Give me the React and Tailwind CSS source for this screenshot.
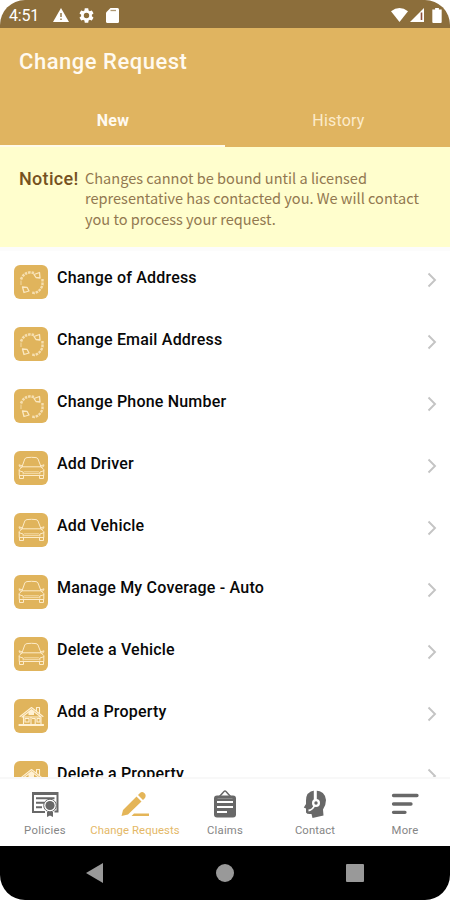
import React from "react";

function CycleIcon() {
  return (
    <svg viewBox="0 0 34 34" className="size-[34px]" fill="none" stroke="#fff1d4" strokeLinejoin="round">
      <path d="M7 14.500Q9.500 7.500 17 7.300L20 8" strokeWidth="2.600" strokeDasharray="2.500 .9" opacity=".7" />
      <path d="M20 9.500l5.500-2 .5 5.500-4-.5Z" strokeWidth="1.300" opacity=".85" />
      <path d="M28.500 14v6Q26.500 26.500 20.500 28L17.500 27.500" strokeWidth="2.400" strokeDasharray="2.600 .9" opacity=".7" />
      <path d="M15 26l-5 1.500-1.500-5.500 4.500.3Z" strokeWidth="1.300" opacity=".85" />
      <path d="M7 15.500v4.500" strokeWidth="1" opacity=".6" />
    </svg>
  );
}

function CarIcon() {
  return (
    <svg viewBox="0 0 34 34" className="size-[34px]" fill="none" stroke="#fdebc8" strokeWidth="1" strokeLinejoin="round" strokeLinecap="round">
      <path d="M8 15.800 10.800 8Q11.300 6.800 13 6.600Q17.500 6 22 6.600Q23.500 6.800 24 8L27 15.800M8 14.800l-3-1 .6 1.800 1.700.7M27 14.800l3-1-.6 1.800-1.700.7M8 15.800h19M8 15.800l-2.800 2.800V24.500h24.600v-5.900L27 15.800" />
      <path d="M5.200 19.800l4 1.200v2M29.800 19.800l-4 1.200v2M5.500 24.500v3h4v-3M25.500 24.500v3h4v-3" />
      <path d="M10.500 20.800h14M10.500 22.600h14" opacity=".7" />
    </svg>
  );
}

function HouseIcon() {
  return (
    <svg viewBox="0 0 34 34" className="size-[34px]" fill="none" stroke="#fff1d4" strokeWidth="1.100" strokeLinejoin="round" strokeLinecap="round">
      <path d="M6 17.500 17.500 8.500 29 17.500M8 18l9.500-7.300L27 18M22.500 12V8.500h3v5.800M9.500 18v7.500M27 18v7.500M5 25.500h24.500M5 26.500h24.500M8.500 18H17v7.500M17 18h10" />
      <path d="M11 19.500h4V23h-4ZM18.500 19.500h2.700v6M23 19.500h3V23h-3Z" />
      <path d="M14.500 16h5.500v-4l-2.500-1.500-3 2Z" fill="#fff1d4" stroke="none" />
    </svg>
  );
}

const requests = [
  { title: "Change of Address", Icon: CycleIcon },
  { title: "Change Email Address", Icon: CycleIcon },
  { title: "Change Phone Number", Icon: CycleIcon },
  { title: "Add Driver", Icon: CarIcon },
  { title: "Add Vehicle", Icon: CarIcon },
  { title: "Manage My Coverage - Auto", Icon: CarIcon },
  { title: "Delete a Vehicle", Icon: CarIcon },
  { title: "Add a Property", Icon: HouseIcon },
  { title: "Delete a Property", Icon: HouseIcon },
];

function StatusBar() {
  return (
    <div className="flex h-7 shrink-0 items-center bg-[#8c6e3b] pt-0.5 pl-[9px] text-white">
      <span className="w-[44px] pt-px text-[16px] leading-none tracking-[-0.2px]">4:51</span>
      <svg viewBox="0 0 16 14" className="h-3.5 w-4" fill="#fff">
        <path d="M8 0 16 14H0Z" />
        <path d="M7.300 5h1.400v4H7.300ZM7.300 10.500h1.400V12H7.300Z" fill="#8c6e3b" />
      </svg>
      <svg viewBox="2 2 20 20" className="ml-2.5 size-[15px]" fill="#fff">
        <path d="M19.140 12.940c.04-.3.060-.61.060-.94s-.02-.64-.07-.94l2.030-1.580a.49.49 0 0 0 .12-.61l-1.920-3.320a.488.488 0 0 0-.59-.22l-2.390.96c-.5-.38-1.030-.7-1.620-.94l-.36-2.540a.484.484 0 0 0-.48-.41h-3.840c-.24 0-.43.17-.47.41l-.36 2.540c-.59.24-1.130.57-1.620.94l-2.390-.96a.48.48 0 0 0-.59.22L2.740 8.870c-.12.21-.08.47.12.61l2.030 1.580c-.05.3-.09.63-.09.94s.02.64.07.94l-2.030 1.580a.49.49 0 0 0-.12.61l1.920 3.320c.12.22.37.29.59.22l2.390-.96c.5.38 1.030.7 1.620.94l.36 2.540c.05.24.24.41.48.41h3.840c.24 0 .44-.17.47-.41l.36-2.540c.59-.24 1.130-.56 1.620-.94l2.390.96c.22.08.47 0 .59-.22l1.920-3.320c.12-.22.07-.47-.12-.61ZM12 15.600a3.600 3.600 0 1 1 0-7.200 3.600 3.600 0 0 1 0 7.200Z" />
      </svg>
      <svg viewBox="0 0 13 15" className="ml-3 h-[15px] w-[13px]" fill="#fff">
        <path d="M4.500 0H11.500Q13 0 13 1.500V13.500Q13 15 11.500 15H1.500Q0 15 0 13.500V4.500Z" />
        <path d="M4.500 2.500h5.500" stroke="#8c6e3b" strokeWidth="1.300" opacity=".7" />
      </svg>
      <svg viewBox="0 0 17 14" className="ml-auto h-3.5 w-[17px]" fill="#fff">
        <path d="M8.500 14 0 3.300Q8.500-3.300 17 3.300Z" />
      </svg>
      <svg viewBox="0 0 14 14" className="ml-[2px] h-3.5 w-3.5" fill="#fff">
        <path d="M14 0V14H0Z" />
        <path d="M11.500 4.500V12" stroke="#8c4e3b" strokeWidth="1.600" />
      </svg>
      <svg viewBox="0 0 10 16" className="mr-[8px] ml-[8px] h-[15px] w-[10px]" fill="#fff">
        <path d="M3 0h4v1.500h3V15q0 1-1 1H1q-1 0-1-1V1.500h3Z" />
      </svg>
    </div>
  );
}

function Header() {
  return (
    <header className="flex h-[119px] shrink-0 flex-col bg-[#e0b460] text-[#fffaf0]">
      <h1 className="h-[67px] pt-5 pl-[19px] text-[22px] leading-7 font-medium tracking-[0.52px]">Change Request</h1>
      <div className="grid grow grid-cols-2 text-center text-base leading-[52px]">
        <div className="h-[52px] overflow-hidden border-b-[2.500px] border-[#fffbea] pl-px font-bold tracking-[0.2px]">New</div>
        <div className="pl-0.5 tracking-[0.2px] text-[#fcebcb]">History</div>
      </div>
    </header>
  );
}

function Notice() {
  return (
    <section className="flex h-[100px] shrink-0 bg-[#fffecd] pt-[21px] pl-[19px] text-[#76521f]">
      <strong className="w-[66px] text-[18px] leading-[22px] font-medium tracking-[0.3px]">Notice!</strong>
      <p className="font-['Noto_Sans_CJK_SC',sans-serif] text-[14.550px] leading-[20.300px] whitespace-nowrap text-[#927850]">
        Changes cannot be bound until a licensed
        <br />
        representative has contacted you. We will contact
        <br />
        you to process your request.
      </p>
    </section>
  );
}

function RequestRow({ title, Icon }) {
  return (
    <li className="flex h-[62.050px] shrink-0 items-start pt-[14px] pr-[13px] pl-[14px]">
      <div className="size-[34px] shrink-0 rounded-[6px] bg-[#e0b45c]">
        <Icon />
      </div>
      <span className="mt-px ml-[9px] text-[16px] leading-6 font-medium tracking-[0.2px] whitespace-nowrap text-[#080808]">{title}</span>
      <svg viewBox="0 0 10 16" className="mt-[7px] ml-auto h-4 w-[10px]" fill="none" stroke="#c4c4c4" strokeWidth="1.900">
        <path d="M1.500 1.500 8 8l-6.500 6.500" />
      </svg>
    </li>
  );
}

function PoliciesIcon() {
  return (
    <svg viewBox="0 0 28 26" className="h-[26px] w-7" fill="none" stroke="#686868" strokeWidth="2">
      <path d="M14 21H2V2h24.500v18.500h-3" />
      <path d="M2 3h24M5 7.300h18.500M5 11.800h8M5 16.300h6" strokeWidth="1.900" />
      <circle cx="19" cy="14.500" r="6.300" fill="#fff" stroke="#686868" strokeWidth="1" />
      <circle cx="19" cy="14.500" r="4.600" fill="#686868" stroke="none" />
      <path d="M16 21v5l3-1.500 3 1.500v-5" fill="#686868" stroke="none" />
    </svg>
  );
}

function PencilIcon() {
  return (
    <svg viewBox="0 0 28 26" className="h-[26px] w-7" fill="#e4b558">
      <path d="M.5 25 2 19 15.500 5.500 20.500 10.500 7 23.500ZM17 4l2-2Q21-.2 23.300 2T24 7l-2 2ZM10.500 25 13 22.500H28V25Z" />
    </svg>
  );
}

function ClaimsIcon() {
  return (
    <svg viewBox="0 0 24 28" className="h-7 w-6" fill="none" stroke="#686868">
      <path d="M6.500 6.500 11 1.500Q12 .5 13 1.500L17.500 6.500" strokeWidth="1.500" />
      <rect x="1" y="5.500" width="22" height="22" rx="3" fill="#686868" stroke="none" />
      <path d="M4 12h16M4 17h16M4 22h10" stroke="#fff" strokeWidth="2" />
      <path d="M4.500 8.500h15" stroke="#999" strokeWidth=".7" />
    </svg>
  );
}

function ContactIcon() {
  return (
    <svg viewBox="0 0 24 28" className="h-7 w-6" fill="#686868">
      <path d="M11.500.5Q3 1.500 3 10.500V14L.8 17.500 3 18.500v4Q4 24.500 8.500 24l1 4 11-2.500-.5-6Q23 15 23 10 22 .8 12.500.5Z" />
      <path d="M12.300 0v10" stroke="#fff" strokeWidth="3" />
      <circle cx="13" cy="13" r="4" fill="#fff" />
      <circle cx="13" cy="13" r="1.700" />
      <path d="M11.500 15.500Q9.500 20 5.500 20.500" fill="none" stroke="#fff" strokeWidth="1.800" />
    </svg>
  );
}

function MoreIcon() {
  return (
    <svg viewBox="0 0 28 22" className="h-[22px] w-7" fill="none" stroke="#686868" strokeWidth="3.300" strokeLinecap="round">
      <path d="M2.500 2.500h23.500M2.500 11h17.500M2.500 19.300h11.500" />
    </svg>
  );
}

const tabs = [
  { label: "Policies", Icon: PoliciesIcon, color: "text-[#858585]", tracking: "tracking-[0.3px]" },
  { label: "Change Requests", Icon: PencilIcon, color: "text-[#e4b866]", tracking: "tracking-[0.1px]" },
  { label: "Claims", Icon: ClaimsIcon, color: "text-[#858585]", tracking: "tracking-[0.2px]" },
  { label: "Contact", Icon: ContactIcon, color: "text-[#858585]", tracking: "tracking-[0.1px]" },
  { label: "More", Icon: MoreIcon, color: "text-[#858585]", tracking: "tracking-[0.2px]" },
];

export default function App() {
  return (
    <div className="h-[900px] w-[450px] bg-white">
      <div className="flex h-full flex-col overflow-hidden rounded-[25px] bg-white font-[Roboto,sans-serif]">
        <StatusBar />
        <Header />
        <Notice />
        <ul className="flex min-h-0 grow flex-col overflow-hidden border-t-4 border-[#fcfcfc]">
          {requests.map((r) => (
            <RequestRow key={r.title} {...r} />
          ))}
        </ul>
        <nav className="grid h-[69px] shrink-0 grid-cols-5 border-t-2 border-[#f8f8f8] bg-white">
          {tabs.map(({ label, Icon, color, tracking }) => (
            <div key={label} className={`flex flex-col items-center ${color}`}>
              <div className="mt-[11px] flex h-7 items-center">
                <Icon />
              </div>
              <span className={`mt-[5px] text-[11.300px] leading-4 whitespace-nowrap ${tracking}`}>{label}</span>
            </div>
          ))}
        </nav>
        <div className="flex h-[54px] shrink-0 items-center justify-between bg-black px-[86px]">
          <svg viewBox="0 0 17 20" className="h-5 w-[17px]" fill="#999">
            <path d="M17 0v20L0 10Z" />
          </svg>
          <div className="size-[18px] rounded-full bg-[#999]" />
          <div className="size-[18px] rounded-[1px] bg-[#999]" />
        </div>
      </div>
    </div>
  );
}
